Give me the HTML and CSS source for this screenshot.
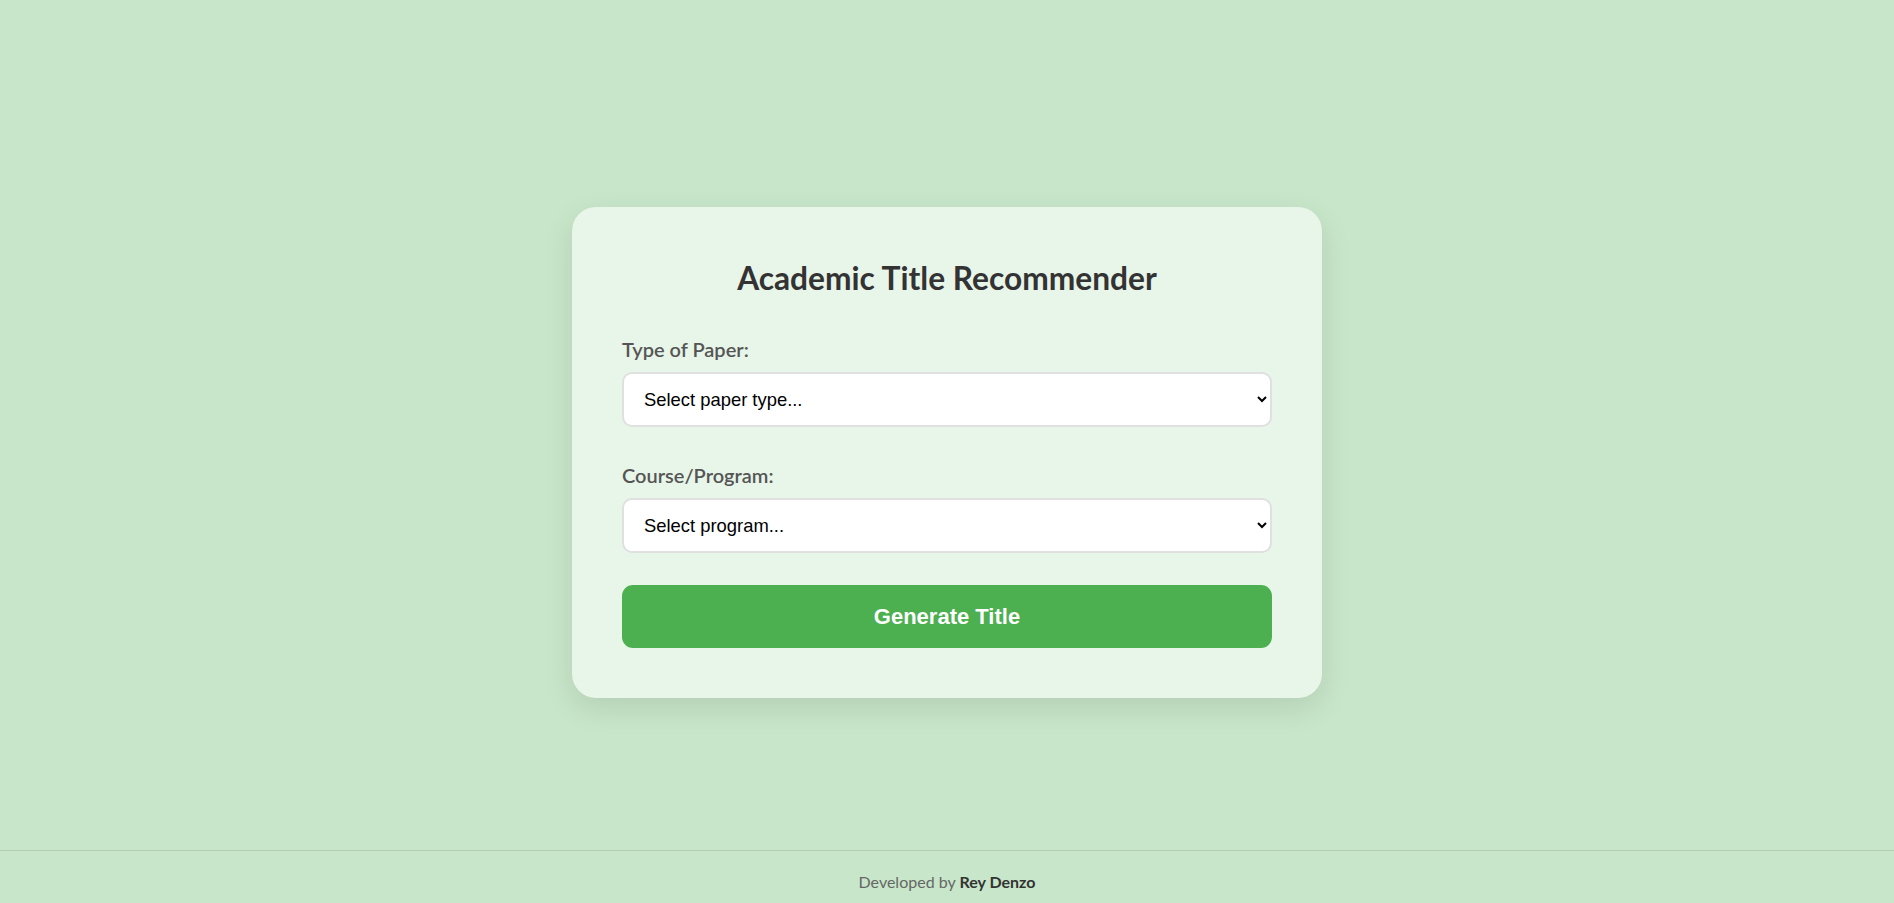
FILE: index.html
```html
<!DOCTYPE html>
<html lang="en">
<head>
<meta charset="UTF-8">
<title>Academic Title Recommender</title>
<link rel="stylesheet" href="styles.css">
</head>
<body>
<main class="page">
  <section class="card">
    <h1 class="card-title">Academic Title Recommender</h1>
    <div class="field">
      <label class="field-label" for="paper">Type of Paper:</label>
      <select class="field-select" id="paper">
        <option>Select paper type...</option>
      </select>
    </div>
    <div class="field field-last">
      <label class="field-label" for="program">Course/Program:</label>
      <select class="field-select" id="program">
        <option>Select program...</option>
      </select>
    </div>
    <button class="btn-generate" type="button">Generate Title</button>
  </section>
</main>
<footer class="footer">Developed by <strong class="footer-name">Rey Denzo</strong></footer>
</body>
</html>
```
FILE: styles.css
```css
* { box-sizing: border-box; }

html, body {
  margin: 0;
  padding: 0;
}

body {
  background: #c8e6c9;
  font-family: "Segoe UI", Lato, "Noto Sans", sans-serif;
  min-height: 100vh;
  display: grid;
  grid-template-rows: 1fr auto;
}

.page {
  display: flex;
  align-items: center;
  justify-content: center;
  padding-top: 55px;
}

.card {
  width: 750px;
  background: #e8f5e9;
  border-radius: 24px;
  padding: 50px;
  box-shadow: 0 10px 30px rgba(0, 0, 0, 0.1);
}

.card-title {
  margin: 2px 0 39.6px;
  font-size: 31.7px;
  line-height: 38.4px;
  font-weight: 700;
  color: #333;
  text-align: center;
}

.field {
  margin-bottom: 36px;
}

.field-last {
  margin-bottom: 32.3px;
}

.field-label {
  display: block;
  font-size: 20px;
  line-height: 24px;
  font-weight: 600;
  color: #555;
  margin-bottom: 11px;
}

.field-select {
  display: block;
  width: 100%;
  height: 55px;
  padding: 0 16.5px 0 16px;
  border: 2px solid #e0e0e0;
  border-radius: 10px;
  background: #fff;
  font-family: "Liberation Sans", Arial, sans-serif;
  font-size: 18.4px;
  color: #000;
}

.btn-generate {
  display: block;
  width: 100%;
  height: 62.7px;
  border: none;
  border-radius: 11px;
  background: #4caf50;
  color: #fff;
  font-family: "Liberation Sans", Arial, sans-serif;
  font-size: 22px;
  font-weight: 700;
  cursor: pointer;
}

.footer {
  height: 53px;
  border-top: 1px solid rgba(0, 0, 0, 0.1);
  padding-top: 21px;
  text-align: center;
  font-size: 16px;
  line-height: 19px;
  color: #666;
}

.footer-name {
  color: #333;
  font-weight: 700;
}
```
